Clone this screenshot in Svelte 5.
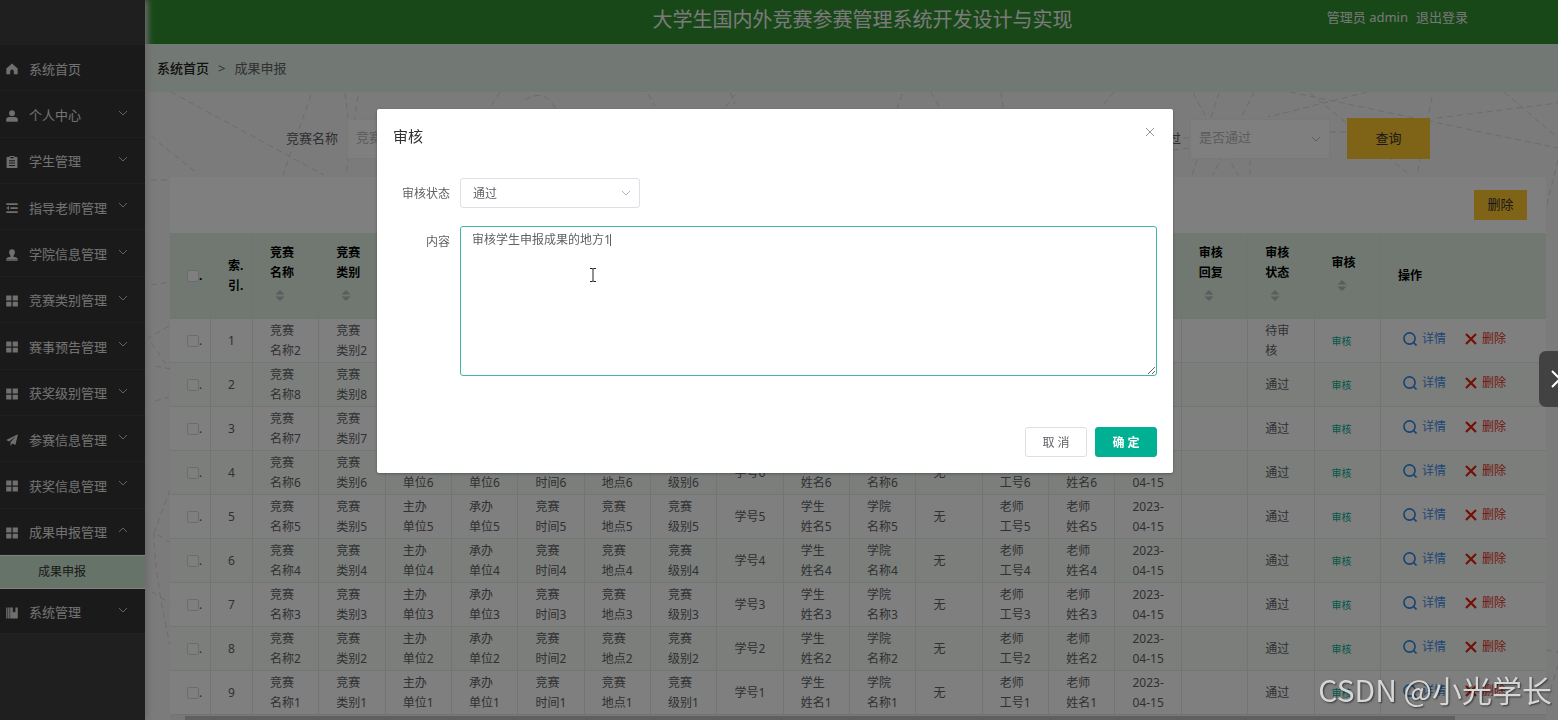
<script lang="ts">
  type MenuItem = { title: string; icon: string; children?: string[]; open?: boolean };

  const mainMenu: MenuItem[] = [
    { title: '系统首页', icon: 'home' },
    { title: '个人中心', icon: 'user', children: [] },
    { title: '学生管理', icon: 'clipboard', children: [] },
    { title: '指导老师管理', icon: 'fold', children: [] },
    { title: '学院信息管理', icon: 'custom', children: [] },
    { title: '竞赛类别管理', icon: 'grid', children: [] },
    { title: '赛事预告管理', icon: 'grid', children: [] },
    { title: '获奖级别管理', icon: 'grid', children: [] },
    { title: '参赛信息管理', icon: 'plane', children: [] },
    { title: '获奖信息管理', icon: 'grid', children: [] },
    { title: '成果申报管理', icon: 'grid', children: ['成果申报'], open: true }
  ];
  const systemMenu: MenuItem[] = [{ title: '系统管理', icon: 'books', children: [] }];

  const columns = [
    '竞赛名称', '竞赛类别', '主办单位', '承办单位', '竞赛时间', '竞赛地点', '竞赛级别', '学号',
    '学生姓名', '学院名称', '成果附件', '老师工号', '老师姓名', '申报日期', '审核回复', '审核状态', '审核'
  ];

  const rows = [2, 8, 7, 6, 5, 4, 3, 2, 1].map((n, i) => ({
    cells: [
      `竞赛名称${n}`, `竞赛类别${n}`, `主办单位${n}`, `承办单位${n}`, `竞赛时间${n}`, `竞赛地点${n}`,
      `竞赛级别${n}`, `学号${n}`, `学生姓名${n}`, `学院名称${n}`, '无', `老师工号${n}`, `老师姓名${n}`,
      '2023-04-15', '', i === 0 ? '待审核' : '通过'
    ]
  }));

  let keyword = $state('');
  let passed = $state('');
  let status = $state('通过');
  let content = $state('审核学生申报成果的地方1');
  let visible = $state(true);
</script>

{#snippet icon(name: string)}
  <svg class="icon" viewBox="0 0 12 12" aria-hidden="true">
    {#if name === 'home'}
      <path d="M6 .6 11.7 5.6V11.2H7.8V8.4a1.8 1.8 0 0 0-3.6 0v2.8H.3V5.6z" />
    {:else if name === 'user'}
      <circle cx="6" cy="3.2" r="2.9" />
      <path d="M.2 11.8V9.6C.2 8 1.4 7 3 7h6c1.6 0 2.8 1 2.8 2.6v2.2z" />
    {:else if name === 'clipboard'}
      <path fill-rule="evenodd" d="M3.5 0h5v1H11.4v11H.6V1h2.9zM4.3 1v1.3h3.4V1zM3 4.2v1h6v-1zM3 6.6v1h6v-1zM3 9v1h6V9z" />
    {:else if name === 'fold'}
      <path d="M.3 1.2h11.4v1.8H.3zM4.4 5.2h7.3v1.7H4.4zM.3 9.2h11.4v1.8H.3zM3 4v4L.3 6z" />
    {:else if name === 'custom'}
      <path d="M6 .3c1.8 0 2.9 1.3 2.9 3S7.9 6 7.4 6.9c0 .8.5 1 1.4 1.2 1.6.3 2.9.7 2.9 2.1H.3c0-1.4 1.3-1.8 2.9-2.1.9-.2 1.4-.4 1.4-1.2C4.100 6 3.100 5 3.100 3.300s1.100-3 2.900-3zM.3 10.600h11.400v1.200H.3z" />
    {:else if name === 'grid'}
      <path d="M.2.6h5.200v4.800H.2zM6.700.6h5.200v4.800H6.700zM.2 6.700h5.200v4.800H.2zM6.700 6.700h5.200v4.800H6.700z" />
    {:else if name === 'plane'}
      <path d="M12 .3.1 6.1l3 1.5L9.500 2.500 4.500 8.300v3.500l2-2.300 2.900 1.500z" />
    {:else}
      <path d="M.2.4h1.300v11.200H.2zM2.100.4h1.500v11.200H2.100zM4.200.4h2.600v5.400l1.300-1.200 1.300 1.200V.4h2.400v11.200H4.200z" />
    {/if}
  </svg>
{/snippet}

{#snippet arrow(up: boolean)}
  <svg class="arrow" viewBox="0 0 10 6" aria-hidden="true">
    <path d={up ? 'M1 5 5 1l4 4' : 'M1 1l4 4 4-4'} />
  </svg>
{/snippet}

{#snippet menu(items: MenuItem[])}
  <ul class="menu">
    {#each items as item}
      <li>
        <a href="#/">
          {@render icon(item.icon)}
          <span>{item.title}</span>
          {#if item.children}
            {@render arrow(!!item.open)}
          {/if}
        </a>
      </li>
    {/each}
  </ul>
{/snippet}

<div class="layout">
  <aside>
    {@render menu(mainMenu)}
    <a class="submenu" href="#/result">成果申报</a>
    {@render menu(systemMenu)}
  </aside>

  <div class="page">
    <header>
      <h1>大学生国内外竞赛参赛管理系统开发设计与实现</h1>
      <div class="user">
        <span>管理员 admin</span>
        <a href="#/logout">退出登录</a>
      </div>
    </header>

    <nav class="breadcrumb">
      <a href="#/">系统首页</a>
      <span class="sep">&gt;</span>
      <span>成果申报</span>
    </nav>

    <main>
      <svg class="backdrop" viewBox="145 92 1413 628" preserveAspectRatio="xMinYMin slice" aria-hidden="true">
        <path d="M171 92 324 175M151 136 198 174M311 95 283 175M345 93l3 25M358 96l-12 79M151 180h19" />
        <path d="M151 285l18-3M169 326l-21 12 22 32M155 366l15 3M155 401l14-4M170 490l-16 43 16 9M154 533q0 40 16 112M152 592l18 11" />
        <path d="M500 92l-10 16M525 100q20-12 30 8M648 94l7 12M730 92l5 12M735 94l-10 14M902 94l-5 14M931 92l9 16M1001 92l2 16M1114 92l-12 14" />
        <path d="M1193 93l45 82M1219 93l-27 82M1254 92l-41 83M1367 92l-99 25M1290 92l268 56M1310 93l100 82M1432 97l-15 78M1437 118l121-15M1504 92l54 46M1250 160v15M1173 150l17-2M1173 138h17M1558 160l-12 48M1330 132h17M1546 650l12 2M1558 665l-12 40" />
      </svg>

      <form class="search">
        <div class="field">
          <label for="keyword">竞赛名称</label>
          <input id="keyword" type="text" placeholder="竞赛名称" bind:value={keyword} />
        </div>
        <div class="field">
          <label for="passed">是否通过</label>
          <div class="select">
            <select id="passed" class="empty" bind:value={passed}>
              <option value="">是否通过</option>
              <option value="是">是</option>
              <option value="否">否</option>
            </select>
            {@render arrow(false)}
          </div>
          <button class="query" type="button">查询</button>
        </div>
      </form>

      <section class="panel">
        <div class="toolbar">
          <button type="button">删除</button>
        </div>
        <table>
          <colgroup>
            <col class="col-check" />
            <col class="col-index" />
            {#each columns as _}
              <col />
            {/each}
            <col class="col-action" />
          </colgroup>
          <thead>
            <tr>
              <th><input type="checkbox" aria-label="全选" />.</th>
              <th>索.<br />引.</th>
              {#each columns as title}
                <th>
                  {title}
                  <svg class="sorter" viewBox="0 0 20 26" aria-hidden="true">
                    <path d="M5.500 11.500 10 7l4.500 4.500zM5.500 13.500 10 18l4.500-4.500z" />
                  </svg>
                </th>
              {/each}
              <th>操作</th>
            </tr>
          </thead>
          <tbody>
            {#each rows as row, index}
              <tr>
                <td><input type="checkbox" aria-label="选择第{index + 1}行" />.</td>
                <td>{index + 1}</td>
                {#each row.cells as cell}
                  <td>{cell}</td>
                {/each}
                <td><button class="audit" type="button" onclick={() => (visible = true)}>审核</button></td>
                <td class="actions">
                  <div>
                    <button class="detail" type="button">
                      <svg viewBox="0 0 14 14" aria-hidden="true">
                        <circle cx="6.5" cy="6.5" r="5.6" />
                        <path d="M10.5 10.5 13.5 13.5" />
                      </svg>
                      详情
                    </button>
                    <button class="remove" type="button">
                      <svg viewBox="0 0 12 12" aria-hidden="true">
                        <path d="M1 1l10 10M11 1 1 11" />
                      </svg>
                      删除
                    </button>
                  </div>
                </td>
              </tr>
            {/each}
          </tbody>
        </table>
        <div class="scrollbar"><span></span></div>
      </section>
    </main>
  </div>
</div>

{#if visible}
  <div class="overlay">
    <div class="dialog" role="dialog" aria-labelledby="dialog-title">
      <div class="dialog-header">
        <h2 id="dialog-title">审核</h2>
        <button class="close" type="button" aria-label="关闭" onclick={() => (visible = false)}>
          <svg viewBox="0 0 10 10" aria-hidden="true"><path d="M1 1l8 8M9 1 1 9" /></svg>
        </button>
      </div>
      <div class="form-item">
        <label for="status">审核状态</label>
        <div class="select small">
          <select id="status" bind:value={status}>
            <option value="通过">通过</option>
            <option value="不通过">不通过</option>
          </select>
          {@render arrow(false)}
        </div>
      </div>
      <div class="form-item">
        <label for="content">内容</label>
        <div class="textarea">
          <textarea id="content" bind:value={content}></textarea>
          <span class="caret"></span>
          <svg class="pointer" viewBox="0 0 8 16" aria-hidden="true">
            <path d="M1 1.5h2.2L4 2l.8-.5H7M4 2v12M1 14.5h2.2L4 14l.8.5H7" />
          </svg>
        </div>
      </div>
      <div class="dialog-footer">
        <button type="button" onclick={() => (visible = false)}>取 消</button>
        <button class="primary" type="button" onclick={() => (visible = false)}>确 定</button>
      </div>
    </div>
  </div>
{/if}

<button class="next" type="button" aria-label="下一张">
  <svg viewBox="0 0 10 18" aria-hidden="true"><path d="M1 1l8 8-8 8" /></svg>
</button>
<div class="watermark">CSDN @小光学长</div>

<style>
  :global(body) {
    overflow: hidden;
    font-family: 'Noto Sans', 'Noto Sans CJK SC', sans-serif;
    font-size: 12px;
    color: #606266;
  }

  button,
  input,
  select,
  textarea {
    font: inherit;
    color: inherit;
    box-sizing: border-box;
    margin: 0;
  }

  button {
    padding: 0;
    border: none;
    background: none;
    cursor: pointer;
  }

  a {
    color: inherit;
    text-decoration: none;
  }

  svg {
    flex: none;
    fill: none;
  }

  .layout {
    display: flex;
    height: 100vh;
    overflow: hidden;
  }

  aside {
    flex: none;
    position: relative;
    z-index: 1;
    width: 145px;
    box-sizing: border-box;
    padding-top: 45px;
    background: #3e3e3e;
    box-shadow: 3px 0 6px #d8d8d8;
  }

  .menu {
    display: grid;
    margin: 0;
    padding: 0;
    list-style: none;
    font-size: 13px;
    color: #e4e4e4;
    background: #343434;
  }

  .menu:first-child {
    height: 510px;
  }

  .menu li {
    display: grid;
    min-height: 44px;
    border-bottom: 1px solid #404040;
  }

  .menu a {
    display: flex;
    align-items: center;
    gap: 11px;
    padding: 1px 17px 0 6px;
  }

  .icon {
    width: 12px;
    height: 12px;
    margin-top: 2px;
    fill: #dedede;
  }

  .arrow {
    width: 10px;
    height: 6px;
    stroke: #c4c4c4;
  }

  .menu .arrow {
    margin: 0 0 4px auto;
  }

  .submenu {
    display: block;
    padding-left: 38px;
    line-height: 32px;
    color: #333;
    background: #cce6d2;
    border-top: 1px solid #fff;
    border-bottom: 1px solid #fff;
  }

  .page {
    flex: 1;
    display: flex;
    flex-direction: column;
    min-width: 0;
  }

  header {
    display: grid;
    flex: none;
    height: 44px;
    padding: 0 90px 0 112px;
    background: #309030;
    color: #fff;
  }

  header > * {
    grid-area: 1 / 1;
  }

  h1 {
    margin: 0;
    font-size: 20px;
    font-weight: 400;
    line-height: 40px;
    text-align: center;
    white-space: nowrap;
    color: #f4f4f4;
  }

  .user {
    display: flex;
    gap: 8px;
    justify-self: end;
    font-size: 13px;
    line-height: 34px;
    color: #eee;
  }

  .breadcrumb {
    display: flex;
    flex: none;
    gap: 9px;
    padding-left: 12px;
    font-size: 13px;
    line-height: 48px;
    background: #e5f0e6;
  }

  .breadcrumb a {
    font-weight: 500;
    color: #222;
  }

  main {
    position: relative;
    flex: 1;
    min-height: 0;
    padding: 26px 12px 0 25px;
    background: #f6f6f6;
  }

  .backdrop {
    position: absolute;
    inset: 0;
    width: 100%;
    height: 100%;
    stroke: #d8d8d8;
    stroke-dasharray: 6 4;
  }

  .search {
    position: relative;
    display: flex;
    justify-content: space-between;
    margin: 0 116px 18px;
    font-size: 13px;
  }

  .field {
    display: flex;
    align-items: center;
  }

  .field label {
    margin-right: 9px;
    padding-bottom: 3px;
  }

  .field input,
  .field select {
    width: 140px;
    height: 40px;
    padding: 0 8px 3px;
    background: #fff;
    border: 1px solid #f0f4f0;
  }

  .field input::placeholder,
  .field .empty {
    color: #b4b8bc;
  }

  .select {
    position: relative;
  }

  .select select {
    appearance: none;
    outline: none;
  }

  .select .arrow {
    position: absolute;
    top: calc(50% - 3px);
    right: 9px;
    stroke: #b4b8bc;
    pointer-events: none;
  }

  .query {
    width: 83px;
    height: 41px;
    margin-left: 17px;
    padding-bottom: 3px;
    color: #333;
    background: #ffc62c;
  }

  .panel {
    position: relative;
    background: #fff;
  }

  .toolbar {
    display: flex;
    justify-content: flex-end;
    padding: 13px 19px;
  }

  .toolbar button {
    width: 53px;
    height: 30px;
    padding-bottom: 3px;
    font-size: 13px;
    color: #333;
    background: #ffc62c;
  }

  table {
    width: 100%;
    table-layout: fixed;
    border-spacing: 0;
  }

  .col-check {
    width: 41px;
  }

  .col-index {
    width: 42px;
  }

  .col-action {
    width: 165px;
  }

  th,
  td {
    height: 44px;
    box-sizing: border-box;
    padding: 0 14px 0 17px;
    line-height: 20px;
    text-align: left;
    word-break: break-all;
    border-right: 1px solid #e2ece6;
    border-bottom: 1px solid #e2ece6;
  }

  th {
    height: 86px;
    font-weight: 700;
    color: #000;
    background: #e0f1e3;
    border-color: #dcede0;
  }

  th:first-child,
  td:first-child,
  th:nth-child(2) {
    padding-right: 0;
    white-space: nowrap;
  }

  th:last-child,
  td:last-child {
    border-right: none;
  }

  tbody tr:nth-child(even) {
    background: #f8fdf8;
  }

  th input,
  td input {
    appearance: none;
    width: 12px;
    height: 12px;
    vertical-align: -2px;
    border: 1px solid #d6d9de;
    border-radius: 2px;
    background: #fff;
  }

  .sorter {
    display: block;
    width: 20px;
    height: 26px;
    fill: #b4b8c0;
  }

  .audit {
    font-size: 10px;
    color: #00b091;
  }

  .actions div {
    display: flex;
    gap: 19px;
    padding: 0 0 4px 5px;
  }

  .actions button {
    display: flex;
    align-items: center;
    gap: 5px;
    white-space: nowrap;
  }

  .detail {
    color: #3d8fe8;
  }

  .remove {
    color: #e8321e;
  }

  .detail svg {
    width: 14px;
    height: 14px;
    stroke: #2e86e6;
    stroke-width: 1.6;
  }

  .remove svg {
    width: 12px;
    height: 12px;
    stroke: #e8200a;
    stroke-width: 2.2;
  }

  .scrollbar {
    height: 16px;
    padding: 1px 91px 0 15px;
    background: #f1f1f1;
  }

  .scrollbar span {
    display: block;
    height: 14px;
    background: #c1c1c1;
  }

  .overlay {
    position: fixed;
    inset: 0;
    z-index: 2;
    padding: 109px 385px 0 377px;
    background: rgba(0, 0, 0, 0.5);
  }

  .dialog {
    padding: 16px;
    background: #fff;
    border-radius: 2px;
    box-shadow: 0 1px 3px rgba(0, 0, 0, 0.3);
  }

  .dialog-header {
    display: flex;
    justify-content: space-between;
    margin-bottom: 31px;
  }

  h2 {
    margin: 0;
    font-size: 15px;
    font-weight: 400;
    line-height: 22px;
    color: #303133;
  }

  .close {
    width: 14px;
    height: 14px;
  }

  .close svg {
    display: block;
    width: 10px;
    height: 10px;
    margin: 2px auto;
    stroke: #909399;
  }

  .form-item {
    display: flex;
    gap: 10px;
    margin-bottom: 18px;
  }

  .form-item label {
    width: 57px;
    line-height: 32px;
    text-align: right;
    height: 30px;
  }

  .small select {
    display: block;
    width: 180px;
    height: 30px;
    padding: 0 12px;
    border: 1px solid #dcdfe6;
    border-radius: 3px;
    background: #fff;
  }

  .textarea {
    position: relative;
    flex: 1;
  }

  textarea {
    display: block;
    width: 100%;
    height: 150px;
    padding: 4px 11px;
    line-height: 18px;
    border: 1px solid #3fb8a4;
    border-radius: 3px;
    outline: none;
    resize: vertical;
  }

  .caret {
    position: absolute;
    top: 8px;
    left: 150px;
    width: 1px;
    height: 12px;
    background: #606266;
  }

  .pointer {
    position: absolute;
    top: 41px;
    left: 129px;
    width: 8px;
    height: 16px;
    stroke: #222;
    pointer-events: none;
  }

  .dialog-footer {
    display: flex;
    justify-content: flex-end;
    gap: 8px;
    padding-top: 33px;
  }

  .dialog-footer button {
    width: 62px;
    height: 30px;
    border: 1px solid #dcdfe6;
    border-radius: 3px;
  }

  .dialog-footer .primary {
    font-weight: 700;
    color: #fff;
    background: #00b092;
    border-color: #00b092;
  }

  .next {
    position: fixed;
    top: 351px;
    right: 0;
    z-index: 3;
    width: 19px;
    height: 56px;
    padding-left: 12px;
    overflow: hidden;
    border-radius: 7px 0 0 7px;
    background: #424242;
  }

  .next svg {
    display: block;
    width: 10px;
    height: 18px;
    stroke: #fff;
    stroke-width: 2;
  }

  .watermark {
    position: fixed;
    right: 6px;
    bottom: 9px;
    z-index: 3;
    font-family: 'Noto Sans CJK SC', sans-serif;
    font-size: 30px;
    line-height: 44px;
    color: #d6d6d6;
    text-shadow: 1px 1px 2px rgba(0, 0, 0, 0.6);
    pointer-events: none;
  }
</style>
